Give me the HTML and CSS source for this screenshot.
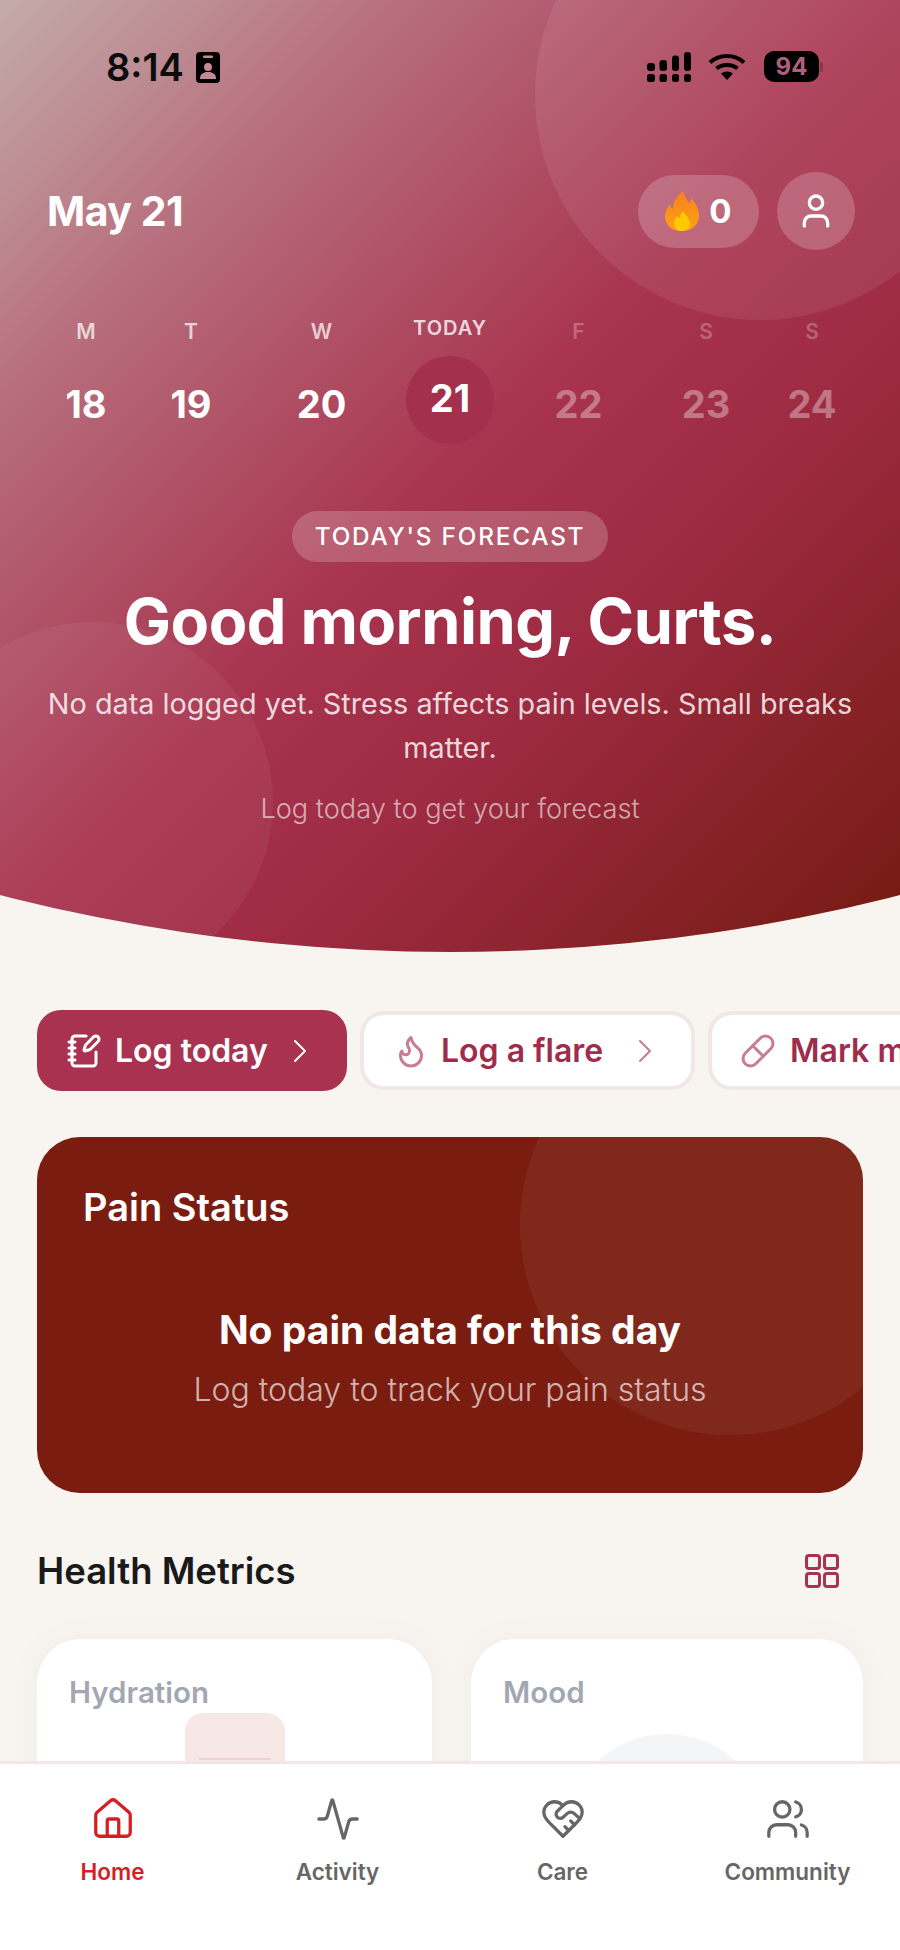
FILE: index.html
```html
<!DOCTYPE html>
<html lang="en">
<head>
  <meta charset="UTF-8" />
  <meta name="viewport" content="width=device-width, initial-scale=1.0"/>
  <title>Home</title>
  <link rel="stylesheet" href="styles.css">
</head>
<body>
  <div class="app">
    <div class="scroll">
      <section class="hero">
        <div class="blob blob-top"></div>
        <div class="blob blob-left"></div>

        <div class="status">
          <div class="status-left">
            <span class="time">8:14</span>
            <svg class="id-icon" viewBox="0 0 24 31">
              <rect width="24" height="31" rx="4" fill="#000"/>
              <rect x="7" y="3.5" width="10" height="2.5" rx="1" fill="#c58a93"/>
              <circle cx="12" cy="15" r="4" fill="#c58a93"/>
              <path d="M4 27c0-5 3-7 8-7s8 2 8 7z" fill="#c58a93"/>
            </svg>
          </div>
          <div class="status-right">
            <svg class="signal" viewBox="0 0 44 30" fill="#000">
              <rect x="0" y="11" width="8" height="8" rx="3"/>
              <rect x="12.5" y="8" width="7.5" height="11" rx="3"/>
              <rect x="25" y="3.500" width="7" height="15.500" rx="3"/>
              <rect x="37" y="0" width="7" height="19" rx="3"/>
              <rect x="0" y="22" width="8" height="8" rx="2.500"/>
              <rect x="12.5" y="22" width="7.500" height="8" rx="2.500"/>
              <rect x="25" y="22" width="7" height="8" rx="2.500"/>
              <rect x="37" y="22" width="7" height="8" rx="2.500"/>
            </svg>
            <svg class="wifi" viewBox="0 0 38 27" fill="none" stroke="#000" stroke-width="4.200">
              <path d="M2 9.500C11.500 .8 26.500 .8 36 9.500"/>
              <path d="M8.500 15.500C14 10.800 24 10.800 29.500 15.500"/>
              <path d="M13 20.500L19 27L25 20.500C21.500 17.800 16.500 17.800 13 20.500Z" fill="#000" stroke="none"/>
            </svg>
            <div class="battery"><span>94</span></div>
            <span class="battery-tip"></span>
          </div>
        </div>

        <div class="top-row">
          <h1 class="date">May 21</h1>
          <div class="top-actions">
            <div class="streak">
              <svg class="streak-flame" viewBox="0 0 34 40">
                <defs>
                  <linearGradient id="flameFill" x1="0" y1="0" x2="0" y2="1">
                    <stop offset="0" stop-color="#f6801f"/>
                    <stop offset="1" stop-color="#fca311"/>
                  </linearGradient>
                </defs>
                <path d="M18 0c1 6 4 8 6 12 1-1 2-3 2-5 5 5 8 11 8 17 0 10-7 16-17 16S0 34 0 25c0-5 3-9 5-12 0 2 1 4 3 5C8 11 12 5 18 0z" fill="url(#flameFill)"/>
                <path d="M18 20c1 3 7 7 7 12 0 4-3 8-8 8s-8-3-8-8c0-3 2-5 3-7 1 1 2 2 3 2 0-2 1-5 3-7z" fill="#ffc800"/>
              </svg>
              <span>0</span>
            </div>
            <div class="avatar">
              <svg viewBox="0 0 24 24" class="line-icon"><path d="M19 21v-2a4 4 0 0 0-4-4H9a4 4 0 0 0-4 4v2"/><circle cx="12" cy="7" r="4"/></svg>
            </div>
          </div>
        </div>

        <div class="week">
          <div class="day"><span class="day-name">M</span><span class="day-num">18</span></div>
          <div class="day"><span class="day-name">T</span><span class="day-num">19</span></div>
          <div class="day"><span class="day-name">W</span><span class="day-num">20</span></div>
          <div class="day today"><span class="day-name">TODAY</span><span class="day-num">21</span></div>
          <div class="day future"><span class="day-name">F</span><span class="day-num">22</span></div>
          <div class="day future"><span class="day-name">S</span><span class="day-num">23</span></div>
          <div class="day future"><span class="day-name">S</span><span class="day-num">24</span></div>
        </div>

        <div class="forecast">
          <span class="forecast-tag">TODAY'S FORECAST</span>
          <h2 class="greeting">Good morning, Curts.</h2>
          <p class="forecast-text">No data logged yet. Stress affects pain levels. Small breaks matter.</p>
          <p class="forecast-hint">Log today to get your forecast</p>
        </div>
      </section>

      <div class="actions">
        <div class="action primary">
          <svg viewBox="0 0 24 24" class="line-icon action-icon"><path d="M13.4 2H6a2 2 0 0 0-2 2v16a2 2 0 0 0 2 2h12a2 2 0 0 0 2-2v-7.400"/><path d="M2 6h4"/><path d="M2 10h4"/><path d="M2 14h4"/><path d="M2 18h4"/><path d="M21.378 5.626a1 1 0 1 0-3.004-3.004l-5.010 5.012a2 2 0 0 0-.506.854l-.837 2.870a.5.5 0 0 0 .620.620l2.870-.837a2 2 0 0 0 .854-.506z"/></svg>
          <span>Log today</span>
          <svg viewBox="0 0 12 22" class="line-icon chevron"><path d="M1 1l10 10L1 21"/></svg>
        </div>
        <div class="action flare">
          <svg viewBox="0 0 24 24" class="line-icon action-icon"><path d="M8.500 14.500A2.500 2.500 0 0 0 11 12c0-1.380-.5-2-1-3-1.072-2.143-.224-4.054 2-6 .5 2.500 2 4.900 4 6.500 2 1.600 3 3.500 3 5.500a7 7 0 1 1-14 0c0-1.153.433-2.294 1-3a2.500 2.500 0 0 0 2.500 2.500z"/></svg>
          <span>Log a flare</span>
          <svg viewBox="0 0 12 22" class="line-icon chevron"><path d="M1 1l10 10L1 21"/></svg>
        </div>
        <div class="action meds">
          <svg viewBox="0 0 24 24" class="line-icon action-icon"><path d="m10.500 20.500 10-10a4.950 4.950 0 1 0-7-7l-10 10a4.950 4.950 0 1 0 7 7Z"/><path d="m8.500 8.500 7 7"/></svg>
          <span>Mark meds</span>
          <svg viewBox="0 0 12 22" class="line-icon chevron"><path d="M1 1l10 10L1 21"/></svg>
        </div>
      </div>

      <section class="pain">
        <div class="pain-blob"></div>
        <h3 class="pain-title">Pain Status</h3>
        <p class="pain-empty">No pain data for this day</p>
        <p class="pain-hint">Log today to track your pain status</p>
      </section>

      <div class="metrics-head">
        <h3>Health Metrics</h3>
        <svg viewBox="0 0 34 34" class="grid-icon">
          <rect x="1.500" y="1.500" width="13" height="13" rx="2.500"/>
          <rect x="19.500" y="1.500" width="13" height="13" rx="2.500"/>
          <rect x="1.500" y="19.500" width="13" height="13" rx="2.500"/>
          <rect x="19.500" y="19.500" width="13" height="13" rx="2.500"/>
        </svg>
      </div>

      <div class="metrics">
        <div class="metric">
          <span class="metric-name">Hydration</span>
          <div class="cup"><div class="cup-line"></div></div>
        </div>
        <div class="metric">
          <span class="metric-name">Mood</span>
          <div class="mood-face"></div>
        </div>
      </div>
    </div>

    <nav class="tabs">
      <div class="tab active">
        <svg viewBox="0 0 24 24" class="line-icon tab-icon"><path d="M15 21v-8a1 1 0 0 0-1-1h-4a1 1 0 0 0-1 1v8"/><path d="M3 10a2 2 0 0 1 .709-1.528l7-5.999a2 2 0 0 1 2.582 0l7 5.999A2 2 0 0 1 21 10v9a2 2 0 0 1-2 2H5a2 2 0 0 1-2-2z"/></svg>
        <span>Home</span>
      </div>
      <div class="tab">
        <svg viewBox="0 0 24 24" class="line-icon tab-icon"><path d="M22 12h-2.480a2 2 0 0 0-1.930 1.460l-2.350 8.360a.25.25 0 0 1-.48 0L9.240 2.180a.25.25 0 0 0-.48 0l-2.350 8.360A2 2 0 0 1 4.490 12H2"/></svg>
        <span>Activity</span>
      </div>
      <div class="tab">
        <svg viewBox="0 0 24 24" class="line-icon tab-icon"><path d="M19 14c1.490-1.460 3-3.210 3-5.500A5.500 5.500 0 0 0 16.500 3c-1.760 0-3 .5-4.500 2-1.500-1.500-2.740-2-4.500-2A5.500 5.500 0 0 0 2 8.500c0 2.300 1.500 4.050 3 5.500l7 7Z"/><path d="M12 5 9.040 7.960a2.170 2.170 0 0 0 0 3.080c.82.82 2.130.85 3 .07l2.070-1.900a2.820 2.820 0 0 1 3.790 0l2.960 2.660"/><path d="m18 15-2-2"/><path d="m15 18-2-2"/></svg>
        <span>Care</span>
      </div>
      <div class="tab">
        <svg viewBox="0 0 24 24" class="line-icon tab-icon"><path d="M16 21v-2a4 4 0 0 0-4-4H6a4 4 0 0 0-4 4v2"/><circle cx="9" cy="7" r="4"/><path d="M22 21v-2a4 4 0 0 0-3-3.870"/><path d="M16 3.130a4 4 0 0 1 0 7.750"/></svg>
        <span>Community</span>
      </div>
    </nav>
  </div>
</body>
</html>
```

FILE: styles.css
```css
* { box-sizing: border-box; }
html, body { margin: 0; padding: 0; }
body { font-family: Inter, "Noto Sans", sans-serif; background: #f8f5f1; color: #1a1a1a; }
h1, h2, h3, p { margin: 0; }

.app { width: 900px; height: 1950px; display: flex; flex-direction: column; overflow: hidden; }
.scroll { flex: 1; min-height: 0; overflow: hidden; }

.line-icon { fill: none; stroke: currentColor; stroke-width: 2; stroke-linecap: round; stroke-linejoin: round; }

/* hero */
.hero {
  position: relative; height: 952px; overflow: hidden; color: #fff;
  background: linear-gradient(135deg, #c4acaa 0%, #b76e7d 22%, #a8344f 50%, #9c2a40 68%, #731a10 100%);
  clip-path: circle(1805px at 450px -853px);
}
.blob { position: absolute; border-radius: 50%; background: rgba(255,255,255,0.08); }
.blob-top { width: 450px; height: 450px; left: 535px; top: -130px; }
.blob-left { width: 360px; height: 360px; left: -87px; top: 622px; background: rgba(255,255,255,0.05); }

.status { position: relative; height: 134px; padding: 51px 77px 0 106px; display: flex; justify-content: space-between; align-items: flex-start; }
.status-left { display: flex; align-items: center; gap: 12px; }
.time { font-size: 38px; line-height: 32px; font-weight: 600; color: #0c0c0c; }
.id-icon { width: 24px; height: 31px; }
.status-right { display: flex; align-items: center; }
.signal { width: 44px; height: 30px; }
.wifi { width: 38px; height: 27px; margin-left: 17px; }
.battery { width: 55px; height: 31px; margin-left: 18px; background: #000; border-radius: 10px; display: flex; align-items: center; justify-content: center; }
.battery span { font-size: 24px; font-weight: 700; color: #b0607a; }
.battery-tip { width: 3px; height: 10px; margin-left: 1px; background: rgba(60,20,40,0.35); border-radius: 0 3px 3px 0; }

.top-row { position: relative; height: 78px; padding: 0 45px 0 47px; display: flex; justify-content: space-between; align-items: center; margin-top: 38px; }
.date { font-size: 41px; font-weight: 700; letter-spacing: -0.5px; }
.top-actions { display: flex; align-items: center; gap: 18px; }
.streak { width: 121px; height: 73px; border-radius: 37px; background: rgba(255,255,255,0.2); display: flex; align-items: center; justify-content: center; gap: 10px; font-size: 33px; font-weight: 700; }
.streak-flame { width: 34px; height: 40px; }
.avatar { width: 78px; height: 78px; border-radius: 50%; background: rgba(255,255,255,0.2); display: flex; align-items: center; justify-content: center; }
.avatar svg { width: 40px; height: 40px; }

.week { position: relative; margin-top: 67px; padding-left: 37px; display: grid; grid-template-columns: 98px 112px 149px 108px 149px 106px 106px; }
.day { display: flex; flex-direction: column; align-items: center; }
.day-name { height: 30px; line-height: 30px; font-size: 21px; font-weight: 600; color: rgba(255,255,255,0.72); }
.day-num { margin-top: 35px; height: 44px; line-height: 44px; font-size: 38px; font-weight: 700; }
.today .day-name { margin-top: -4px; font-size: 20px; letter-spacing: 1px; color: rgba(255,255,255,0.8); }
.today .day-num { width: 88px; height: 88px; line-height: 84px; margin-top: 13px; text-align: center; border-radius: 50%; background: #a3304d; }
.future { opacity: 0.35; }

.forecast { position: relative; margin-top: 67px; padding: 0 40px; display: flex; flex-direction: column; align-items: center; text-align: center; }
.forecast-tag { height: 51px; line-height: 51px; padding: 0 23px; border-radius: 26px; background: rgba(255,255,255,0.2); font-size: 24.300px; font-weight: 500; letter-spacing: 1.800px; }
.greeting { margin-top: 23px; font-size: 63px; line-height: 72px; font-weight: 700; letter-spacing: -0.5px; }
.forecast-text { margin-top: 25px; font-size: 28.800px; line-height: 44px; color: rgba(255,255,255,0.82); }
.forecast-hint { margin-top: 21px; font-size: 27.200px; line-height: 36px; font-weight: 300; color: rgba(255,255,255,0.6); }

/* quick actions */
.actions { margin-top: 58px; padding-left: 37px; display: flex; align-items: center; gap: 13px; }
.action { flex: none; height: 81px; border-radius: 24px; display: flex; align-items: center; font-size: 32px; font-weight: 600; white-space: nowrap; }
.action.primary { width: 310px; padding-left: 29px; background: #a8324f; color: #fff; }
.action.flare, .action.meds { height: 79px; background: #fff; border: 4px solid #f1e7e4; color: #a02c4c; }
.action.flare { width: 335px; padding-left: 29px; }
.action.meds { padding-left: 28px; }
.action-icon { width: 36px; height: 36px; flex: none; }
.action.primary .action-icon { margin-right: 13px; }
.action.flare .action-icon { margin-right: 12px; color: #c77d92; }
.action.meds .action-icon { margin-right: 14px; color: #c77d92; }
.chevron { width: 12px; height: 22px; margin-left: 26px; flex: none; }
.action.flare .chevron { margin-left: 36px; color: #c77d92; }
.action.meds .chevron { color: #c77d92; }

/* pain */
.pain { position: relative; overflow: hidden; margin: 46px 37px 0; height: 356px; padding: 0 46px; border-radius: 43px; background: #7a1c10; color: #fff; text-align: center; }
.pain-blob { position: absolute; width: 420px; height: 420px; left: 483px; top: -122px; border-radius: 50%; background: rgba(255,255,255,0.055); }
.pain-title { position: relative; padding-top: 50px; font-size: 38px; line-height: 40px; font-weight: 600; text-align: left; }
.pain-empty { position: relative; margin-top: 81px; font-size: 39px; line-height: 44px; font-weight: 700; }
.pain-hint { position: relative; margin-top: 20px; font-size: 32px; line-height: 36px; font-weight: 300; color: rgba(255,255,255,0.68); }

/* metrics */
.metrics-head { margin-top: 57px; padding: 0 61px 0 37px; display: flex; justify-content: space-between; align-items: center; }
.metrics-head h3 { font-size: 36.500px; line-height: 42px; font-weight: 600; }
.grid-icon { width: 34px; height: 34px; fill: none; stroke: #a8324f; stroke-width: 3; }

.metrics { margin-top: 47px; padding: 0 37px; display: grid; grid-template-columns: 395px 392px; gap: 39px; }
.metric { position: relative; overflow: hidden; height: 400px; border-radius: 44px 44px 0 0; padding: 35px 32px; background: #fff; box-shadow: 0 0 30px rgba(120,90,80,0.06); }
.metric-name { font-size: 29.500px; line-height: 36px; font-weight: 600; color: #a2a7b2; }
.cup { position: absolute; left: 148px; top: 74px; width: 100px; height: 130px; border-radius: 18px; background: #f8e8e5; }
.cup-line { margin: 45px auto 0; width: 72px; height: 2px; background: #eed2d2; }
.mood-face { position: absolute; left: 95px; top: 95px; width: 202px; height: 202px; border-radius: 50%; background: #f3f5f6; }

/* bottom tabs */
.tabs { flex: none; height: 189px; padding-top: 32px; display: grid; grid-template-columns: repeat(4, 225px); background: #fff; border-top: 3px solid #f3e6e6; color: #666; }
.tab { display: flex; flex-direction: column; align-items: center; }
.tab-icon { width: 46px; height: 46px; stroke-width: 1.700; }
.tab span { margin-top: 16px; font-size: 22.500px; line-height: 28px; font-weight: 600; }
.tab.active { color: #d41f26; }
```
